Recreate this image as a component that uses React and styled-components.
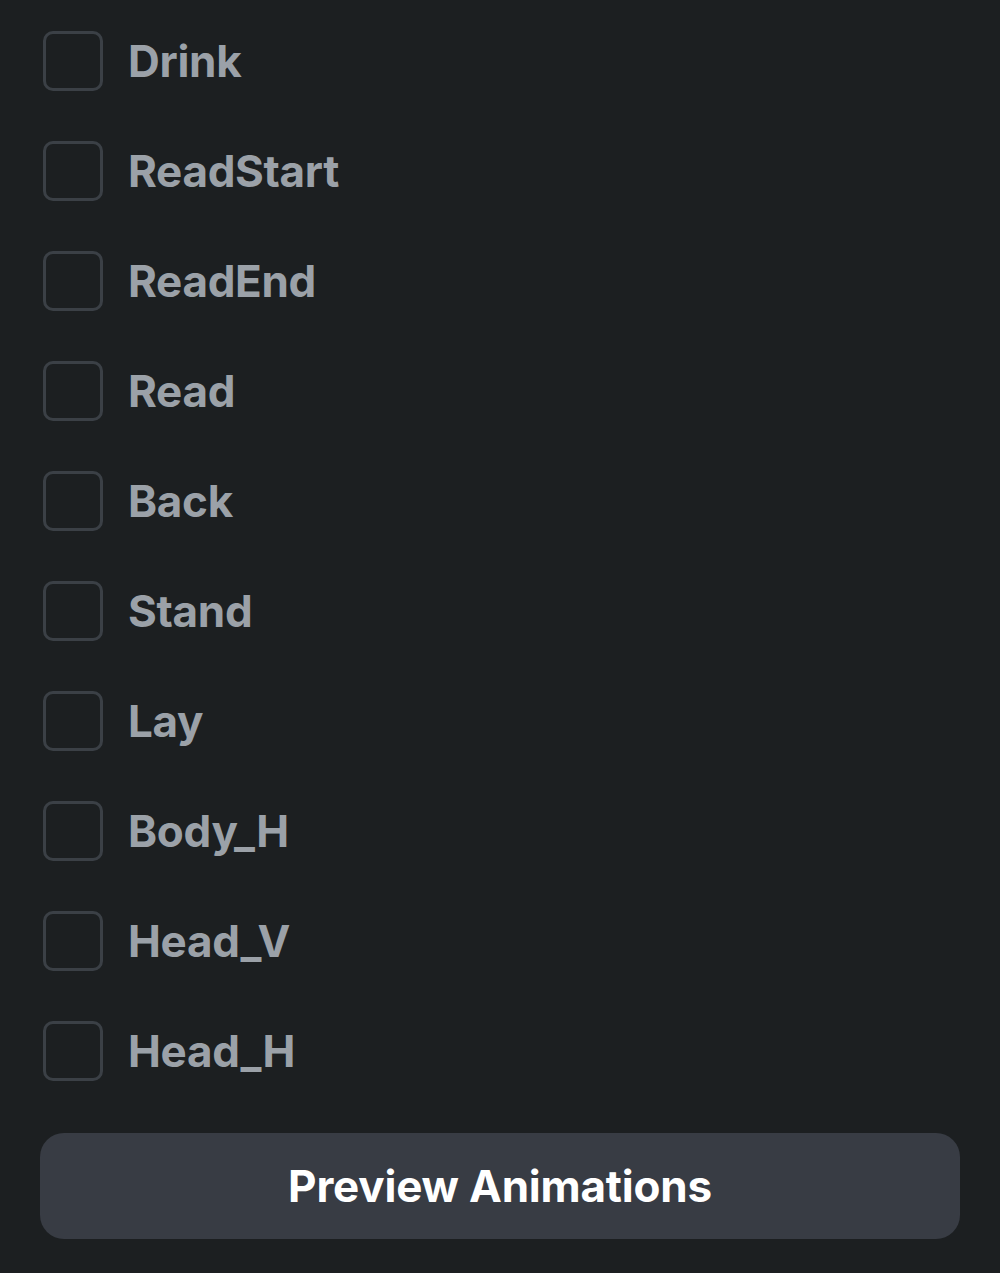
import React from "react";
import styled, { createGlobalStyle } from "styled-components";

const GlobalStyle = createGlobalStyle`
  html, body {
    margin: 0;
    padding: 0;
    background: #1c1f21;
  }
  body {
    font-family: "Inter", "Noto Sans", sans-serif;
  }
`;

const animations = [
  "Drink",
  "ReadStart",
  "ReadEnd",
  "Read",
  "Back",
  "Stand",
  "Lay",
  "Body_H",
  "Head_V",
  "Head_H",
];

const Panel = styled.div`
  width: 1000px;
  height: 1273px;
  box-sizing: border-box;
  background: #1c1f21;
  padding: 31px 40px 0 40px;
  display: flex;
  flex-direction: column;
`;

const List = styled.div`
  display: flex;
  flex-direction: column;
  gap: 50px;
  padding-left: 3px;
`;

const Row = styled.label`
  display: flex;
  align-items: center;
  gap: 25px;
  height: 60px;
  cursor: pointer;
`;

const Box = styled.span`
  width: 60px;
  height: 60px;
  box-sizing: border-box;
  border: 3px solid #3b4046;
  border-radius: 10px;
  flex-shrink: 0;
`;

const Label = styled.span`
  font-size: 44px;
  font-weight: 700;
  color: #9ba1a8;
  letter-spacing: -0.3px;
  line-height: 1;
`;

const PreviewButton = styled.button`
  margin-top: 52px;
  width: 920px;
  height: 106px;
  border: none;
  border-radius: 24px;
  background: #383c44;
  color: #ffffff;
  font-family: "Inter", "Noto Sans", sans-serif;
  font-size: 44px;
  font-weight: 700;
  letter-spacing: -0.2px;
  cursor: pointer;
`;

export default function App() {
  return (
    <>
      <GlobalStyle />
      <Panel>
        <List>
          {animations.map((name) => (
            <Row key={name}>
              <Box />
              <Label>{name}</Label>
            </Row>
          ))}
        </List>
        <PreviewButton>Preview Animations</PreviewButton>
      </Panel>
    </>
  );
}
